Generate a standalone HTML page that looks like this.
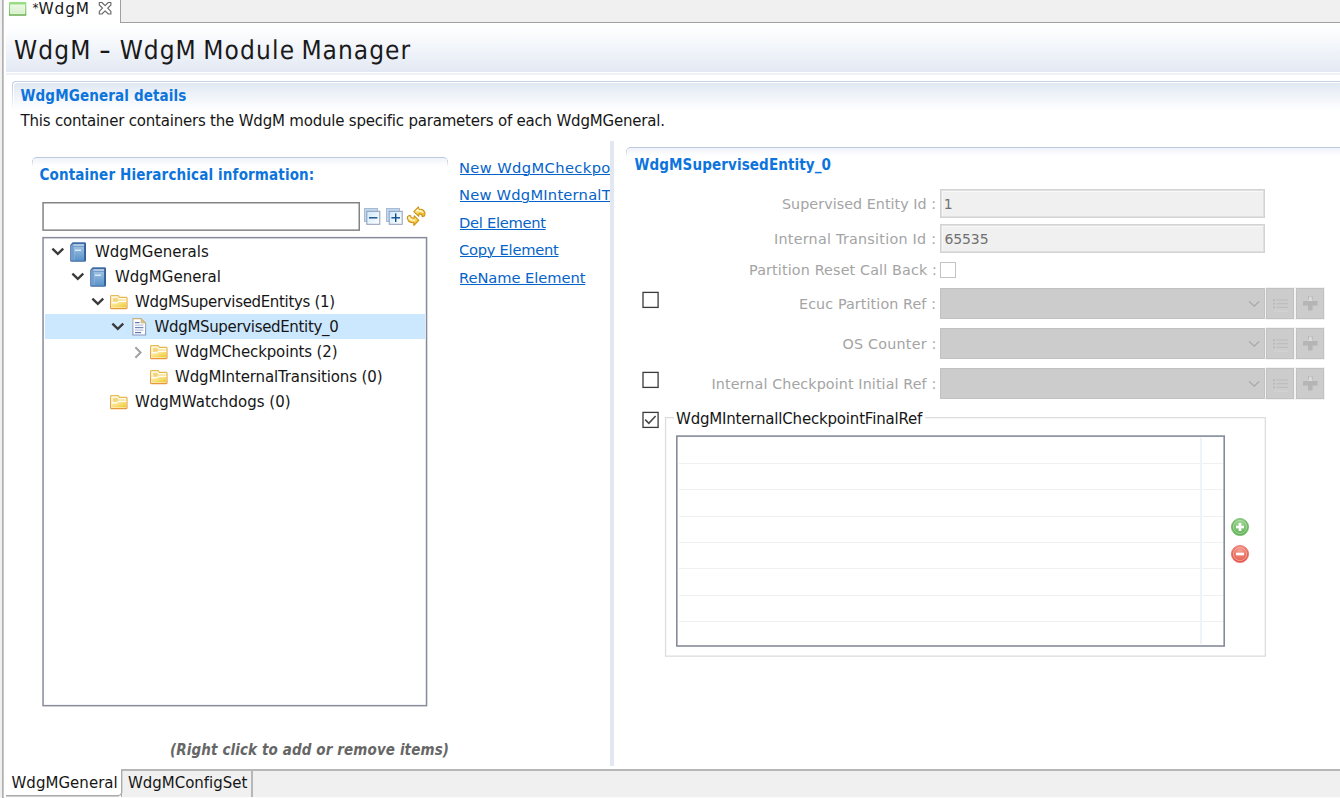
<!DOCTYPE html>
<html lang="en">
<head>
<meta charset="utf-8">
<title>WdgM - WdgM Module Manager</title>
<style>
html,body{margin:0;padding:0;background:#fff;}
body{width:1340px;height:798px;overflow:hidden;position:relative;font-family:'DejaVu Sans','Liberation Sans',sans-serif;font-size:15px;color:#161616;}
.a{position:absolute;box-sizing:border-box;}
.t{position:absolute;white-space:pre;display:block;}
svg{position:absolute;overflow:visible;}
.lk{position:absolute;left:0;white-space:pre;display:block;line-height:20px;font-size:14.7px;color:#0563c9;text-decoration:underline;text-decoration-thickness:1px;text-underline-offset:1px;cursor:pointer;}
.combo{position:absolute;box-sizing:border-box;left:940px;width:325px;height:31px;background:#cccccc;border:1px solid #c1c1c1;}
.btn{position:absolute;box-sizing:border-box;width:28px;height:31px;background:#cccccc;border:1px solid #c1c1c1;box-shadow:0 0 0 1px #f3f3f3;}
.fld{position:absolute;box-sizing:border-box;left:940px;width:325px;height:29px;background:#f0f0f0;border:1px solid #d3d3d3;box-shadow:inset 0 0 0 1px #dfdfdf, inset 2px 2px 0 0 #f8f8f8;}
.cb{position:absolute;box-sizing:border-box;left:642px;width:16px;height:16px;border:1px solid #333;background:#fff;}
.gl{position:absolute;left:679px;width:544px;height:1px;background:#f0f0f0;}
</style>
</head>
<body>
<!-- window left edge -->
<div class="a" style="left:0;top:0;width:2px;height:798px;background:#f0f0f0"></div>
<div class="a" style="left:2px;top:0;width:1px;height:798px;background:#b2b2b2"></div>
<div class="a" style="left:3px;top:0;width:1px;height:798px;background:#c6c6c6"></div>

<!-- top tab bar -->
<div class="a" style="left:120px;top:0;width:1220px;height:23px;background:#f0f0f0;border-left:1px solid #a0a0a0;border-bottom:1px solid #a0a0a0"></div>
<!-- tab icon -->
<svg style="left:8.8px;top:1.95px" width="18" height="14" viewBox="0 0 18 14">
 <defs><linearGradient id="gi0" x1="0" y1="0" x2="0" y2="1"><stop offset="0" stop-color="#9ce084"/><stop offset="0.75" stop-color="#7ccb62"/><stop offset="1" stop-color="#64aa4e"/></linearGradient>
 <linearGradient id="gi" x1="0" y1="0" x2="0" y2="1"><stop offset="0" stop-color="#ebf8e4"/><stop offset="1" stop-color="#d7efcb"/></linearGradient></defs>
 <rect x="0" y="0" width="17.3" height="13.85" rx="0.7" fill="url(#gi0)"/>
 <rect x="1.2" y="2.5" width="14.9" height="9.7" fill="#f3fbef"/>
 <rect x="1.7" y="3" width="13.9" height="8.7" fill="url(#gi)"/>
</svg>
<!-- close X -->
<svg style="left:98px;top:1px" width="15" height="15" viewBox="0 0 15 15">
 <path d="M1.3 1.5 L3.9 1.5 L7.1 4.7 L10.3 1.5 L12.9 1.5 L12.9 4 L9.7 7.2 L12.9 10.4 L12.9 13 L10.3 13 L7.1 9.8 L3.9 13 L1.3 13 L1.3 10.4 L4.5 7.2 L1.3 4 Z" fill="#fff" stroke="#686868" stroke-width="1.15" stroke-linejoin="round"/>
</svg>

<!-- title band -->
<div class="a" style="left:6px;top:23px;width:1334px;height:49px;background:linear-gradient(#ffffff 0%,#fbfcfe 20%,#e3e9f3 100%)"></div>
<div class="a" style="left:6px;top:73px;width:1334px;height:2px;background:#eef2f8"></div>

<!-- section: WdgMGeneral details -->
<div class="a" style="left:12px;top:81px;width:1340px;height:29px;border-top:1px solid #c3d0e2;border-left:1px solid #c3d0e2;border-radius:4px 0 0 0;background:#fff"></div>
<div class="a" style="left:14px;top:83px;width:1340px;height:27px;border-radius:3px 0 0 0;background:linear-gradient(#e1e8f3,#ffffff)"></div>
<div class="a" style="left:12px;top:86px;width:1px;height:25px;background:linear-gradient(rgba(255,255,255,0),#ffffff)"></div>

<!-- sash -->
<div class="a" style="left:610px;top:141px;width:4px;height:625px;background:#e1e8f2"></div>

<!-- left section header -->
<div class="a" style="left:32px;top:157px;width:416px;height:9px;border-top:1px solid #bccbe0;border-radius:5px 5px 0 0;background:linear-gradient(#f0f3f9,#ffffff)"></div>
<div class="a" style="left:32px;top:160px;width:1px;height:7px;background:linear-gradient(#c3cfe0,#ffffff)"></div>
<div class="a" style="left:447px;top:160px;width:1px;height:7px;background:linear-gradient(#c3cfe0,#ffffff)"></div>

<!-- right section header -->
<div class="a" style="left:626px;top:147px;width:760px;height:9px;border-top:1px solid #bccbe0;border-radius:5px 0 0 0;background:linear-gradient(#f0f3f9,#ffffff)"></div>
<div class="a" style="left:626px;top:150px;width:1px;height:7px;background:linear-gradient(#c3cfe0,#ffffff)"></div>

<!-- filter input -->
<svg style="left:0;top:0" width="1340" height="798"><rect x="43.05" y="202.75" width="316.20" height="27.40" fill="#fff" stroke="#848484" stroke-width="1.5"/></svg>

<!-- collapse all -->
<svg style="left:364px;top:208px" width="17" height="17" viewBox="0 0 17 17">
 <defs><linearGradient id="gb" x1="0" y1="0" x2="1" y2="1"><stop offset="0" stop-color="#cfe8f8"/><stop offset="1" stop-color="#ffffff"/></linearGradient></defs>
 <rect x="0.5" y="0.5" width="13" height="13" fill="#bfd9ee" stroke="#a9b9d2"/>
 <rect x="2.8" y="3.3" width="13" height="13" fill="url(#gb)" stroke="#8e9cba"/>
 <rect x="5" y="9.1" width="8.4" height="1.4" fill="#0f4c8a"/>
</svg>
<!-- expand all -->
<svg style="left:386px;top:208px" width="17" height="17" viewBox="0 0 17 17">
 <rect x="0.5" y="0.5" width="13" height="13" fill="#bfd9ee" stroke="#a9b9d2"/>
 <rect x="3.2" y="3.3" width="13" height="13" fill="url(#gb)" stroke="#8e9cba"/>
 <rect x="5.4" y="9.1" width="8.6" height="1.4" fill="#0f4c8a"/>
 <rect x="9" y="5.4" width="1.4" height="8.6" fill="#0f4c8a"/>
</svg>
<!-- refresh -->
<svg style="left:406px;top:206px" width="20" height="20" viewBox="0 0 20 20">
 <defs><linearGradient id="gy" x1="0" y1="0" x2="0.6" y2="1"><stop offset="0" stop-color="#fff6c0"/><stop offset="0.5" stop-color="#f9dd6a"/><stop offset="1" stop-color="#eeb92a"/></linearGradient></defs>
 <path d="M7.8 5.6 L12.5 1 L12.9 3.5 C15 3 17.6 3.8 18.7 6.2 C19.2 7.6 19 9.2 18.5 10 L16.2 10.6 C16.2 8.8 15.4 7.7 13 7.9 L12.8 10.3 Z" fill="url(#gy)" stroke="#cc9216" stroke-width="1.1" stroke-linejoin="round"/>
 <path d="M10 5.4 L12 3.6 L12.4 5 C14.5 4.6 16.4 5.2 17.2 6.8" fill="none" stroke="#fffbe0" stroke-width="1.1" opacity="0.9"/>
 <path d="M12.8 14.3 L7.9 19.4 L7.9 16.7 C5.6 17 3 16.2 1.9 13.8 C1.3 12.4 1.4 11.2 1.6 10.6 L3.2 9.5 L4.7 9.7 C4.6 11.4 5.6 12.3 8 12.1 L8.3 9.8 Z" fill="url(#gy)" stroke="#cc9216" stroke-width="1.1" stroke-linejoin="round"/>
 <path d="M3 11.2 C3.2 13 5.2 14.6 8.6 14.2 L8.8 15.2" fill="none" stroke="#fffbe0" stroke-width="1.1" opacity="0.9"/>
</svg>

<!-- tree -->
<svg style="left:0;top:0" width="1340" height="798"><rect x="43.05" y="237.65" width="383.50" height="468.00" fill="#fff" stroke="#868b99" stroke-width="1.5"/></svg>
<div class="a" style="left:45px;top:314px;width:380px;height:25px;background:#cce8ff"></div>

<svg width="0" height="0" style="left:0;top:0">
 <defs>
  <linearGradient id="bk1" x1="0" y1="0" x2="0" y2="1"><stop offset="0" stop-color="#9cc0e2"/><stop offset="1" stop-color="#5a93ca"/></linearGradient>
  <linearGradient id="fo1" x1="0" y1="0" x2="1" y2="1"><stop offset="0" stop-color="#fcf0bc"/><stop offset="0.55" stop-color="#f6dc6c"/><stop offset="1" stop-color="#efc62e"/></linearGradient>
  <linearGradient id="fo2" x1="0" y1="0" x2="0" y2="1"><stop offset="0" stop-color="#e7bd52"/><stop offset="1" stop-color="#e6983a"/></linearGradient>
  <g id="book">
   <path d="M0.2 3 L2.6 0.2 L14.8 0.2 Q16 0.2 16 1.4 L16 18.2 Q16 19.8 14.4 19.8 L1.6 19.8 Q0.2 19.8 0.2 18.4 Z" fill="#416da5"/>
   <path d="M0.9 3.4 L2.9 1.9 L3.4 1.9 L3.4 18.6 L0.9 18.6 Z" fill="#729ecd"/>
   <rect x="3.3" y="2.1" width="11.2" height="2.2" fill="#b3cce8"/>
   <rect x="3.6" y="4.7" width="10.6" height="13.6" fill="url(#bk1)"/>
   <rect x="3.6" y="4.7" width="0.9" height="13.6" fill="#a9c8e6" opacity="0.7"/>
   <rect x="14.3" y="1.6" width="1.7" height="17" fill="#335f96"/>
   <rect x="5" y="7.5" width="6" height="1.5" fill="#dce9f6"/>
   <rect x="1" y="18.2" width="13.4" height="1" fill="#5b88bd"/>
  </g>
  <g id="folder">
   <path d="M0.6 1.4 Q0.6 0.6 1.4 0.6 L8.2 0.6 L9.4 2.4 L16.2 2.4 Q17 2.4 17 3.2 L17 12.8 Q17 13.6 16.2 13.6 L1.4 13.6 Q0.6 13.6 0.6 12.8 Z" fill="#fffaea" stroke="url(#fo2)" stroke-width="1.2"/>
   <path d="M2.6 2.7 L7.5 2.7 L8.7 4.3 L15.6 4.3 L15.6 6 L8.8 6 L7.2 7.4 L2.6 7.4 Z" fill="#f7e3a0"/>
   <path d="M3.4 3.3 L7 3.3 L7.8 4.6 L7.6 5.6 L6.6 6.6 L3.4 6.6 Z" fill="#f2d070" opacity="0.8"/>
   <path d="M1.8 8.3 L7 8.3 L8.6 6.9 L16 6.9 L16 12.6 L1.8 12.6 Z" fill="url(#fo1)"/>
   <path d="M1.6 7.8 L6.9 7.8 L8.5 6.4 L16.2 6.4" fill="none" stroke="#fffef6" stroke-width="1"/>
  </g>
  <g id="chevd"><path d="M1.2 1.4 L5.8 5.8 L10.4 1.4" fill="none" stroke="#3a3a3a" stroke-width="2.3" stroke-linecap="square" stroke-linejoin="miter"/></g>
  <g id="chevr"><path d="M1.1 1 L5.6 5.5 L1.1 10" fill="none" stroke="#a2a2a2" stroke-width="2" stroke-linecap="square" stroke-linejoin="miter"/></g>
  <g id="cchev"><path d="M0.3 0.5 L5.2 5.2 L10.1 0.5" fill="none" stroke="#a9a9a9" stroke-width="1.3"/></g>
  <g id="licon">
   <rect x="0" y="0" width="2" height="2" fill="#bcbcbc"/><rect x="3.7" y="0.4" width="11.2" height="1.2" fill="#bdbdbd"/>
   <rect x="0" y="3.7" width="2" height="2" fill="#bcbcbc"/><rect x="3.7" y="4.1" width="11.2" height="1.2" fill="#bdbdbd"/>
   <rect x="0" y="7.4" width="2" height="2" fill="#bcbcbc"/><rect x="3.7" y="7.8" width="11.2" height="1.2" fill="#bdbdbd"/>
   <rect x="1" y="11.6" width="14" height="1" fill="#d4d4d4"/>
  </g>
  <g id="picon">
   <rect x="0" y="5" width="14.6" height="4.6" fill="#b5b5b5"/>
   <rect x="5" y="0" width="4.6" height="14.4" fill="#b5b5b5"/>
   <path d="M5.9 0.5 L8.7 0.5 L8.7 3 L9.6 5 L5 5 L5.9 3 Z" fill="#dcdcdc"/>
  </g>
 </defs>
</svg>

<!-- row1 -->
<svg style="left:52.2px;top:248.3px" width="12" height="8"><use href="#chevd"/></svg>
<svg style="left:70px;top:242px" width="16" height="20"><use href="#book"/></svg>
<!-- row2 -->
<svg style="left:72.2px;top:273.3px" width="12" height="8"><use href="#chevd"/></svg>
<svg style="left:90px;top:267px" width="16" height="20"><use href="#book"/></svg>
<!-- row3 -->
<svg style="left:92.2px;top:298.3px" width="12" height="8"><use href="#chevd"/></svg>
<svg style="left:110px;top:295.2px" width="18" height="15"><use href="#folder"/></svg>
<!-- row4 -->
<svg style="left:112.2px;top:323.3px" width="12" height="8"><use href="#chevd"/></svg>
<svg style="left:132px;top:318px" width="15" height="18" viewBox="0 0 15 18">
 <defs><linearGradient id="dc" x1="0" y1="0" x2="0" y2="1"><stop offset="0" stop-color="#c9b27a"/><stop offset="0.45" stop-color="#9aa5c4"/><stop offset="1" stop-color="#8896bc"/></linearGradient></defs>
 <path d="M0.9 0.6 L9 0.6 L13.6 5 L13.6 17 L0.9 17 Z" fill="#fdfdff" stroke="url(#dc)" stroke-width="1.1"/>
 <path d="M9 0.6 L9 5 L13.6 5 Z" fill="#dcc48c" stroke="#c9ae72" stroke-width="0.6"/>
 <rect x="3" y="4" width="4.6" height="1.2" fill="#5d77b2"/>
 <rect x="3" y="6.4" width="8.4" height="1.5" fill="#c3cde4"/>
 <rect x="3" y="9" width="8.4" height="1.2" fill="#6f86bb"/>
 <rect x="3" y="11.4" width="8.4" height="1.5" fill="#c3cde4"/>
 <rect x="3" y="14" width="6" height="1.2" fill="#5d77b2"/>
</svg>
<!-- row5 -->
<svg style="left:134.5px;top:347px" width="8" height="12"><use href="#chevr"/></svg>
<svg style="left:150px;top:345.2px" width="18" height="15"><use href="#folder"/></svg>
<!-- row6 -->
<svg style="left:150px;top:370.2px" width="18" height="15"><use href="#folder"/></svg>
<!-- row7 -->
<svg style="left:110px;top:395.2px" width="18" height="15"><use href="#folder"/></svg>

<!-- links (clipped by sash) -->
<div class="a" style="left:460px;top:150px;width:150px;height:160px;overflow:hidden">
<a class="lk" style="left:-1px;top:7.71px;letter-spacing:0.379px">New WdgMCheckpoint</a>
<a class="lk" style="left:-1px;top:35.21px;letter-spacing:0.219px">New WdgMInternalTransition</a>
<a class="lk" style="left:-1px;top:62.71px;letter-spacing:-0.300px">Del Element</a>
<a class="lk" style="left:-1px;top:90.21px;letter-spacing:-0.273px">Copy Element</a>
<a class="lk" style="left:-1px;top:117.71px;letter-spacing:-0.077px">ReName Element</a>

</div>

<!-- bottom tab bar -->
<div class="a" style="left:121px;top:769px;width:1219px;height:28px;background:#f0f0f0;border-top:2px solid #b7b7b7;border-left:1px solid #aaaaaa"></div>
<div class="a" style="left:4px;top:770px;width:118px;height:26px;border-right:1px solid #aaaaaa;border-bottom:1px solid #aaaaaa;border-radius:0 0 4px 0;background:#fff"></div>
<div class="a" style="left:122px;top:771px;width:1px;height:22px;background:#d4d4d4"></div>
<div class="a" style="left:4px;top:795px;width:2px;height:1px;background:#fff"></div>
<div class="a" style="left:6px;top:796px;width:113px;height:1px;background:#cfcfcf"></div>
<div class="a" style="left:251px;top:771px;width:2px;height:26px;background:#b7b7b7"></div>
<div class="a" style="left:4px;top:797px;width:1336px;height:1px;background:#fbfbfb"></div>

<!-- right: fields -->
<div class="fld" style="top:189px"></div>
<div class="fld" style="top:224px"></div>
<div class="a" style="left:940px;top:262px;width:16px;height:16px;border:1px solid #c3c3c3;background:#fff"></div>

<div class="combo" style="top:288px"></div>
<div class="combo" style="top:328px"></div>
<div class="combo" style="top:368px"></div>
<svg style="left:1248.5px;top:301px" width="11" height="7"><use href="#cchev"/></svg>
<svg style="left:1248.5px;top:341px" width="11" height="7"><use href="#cchev"/></svg>
<svg style="left:1248.5px;top:381px" width="11" height="7"><use href="#cchev"/></svg>

<div class="btn" style="left:1266px;top:288px"></div><div class="btn" style="left:1296px;top:288px"></div>
<div class="btn" style="left:1266px;top:328px"></div><div class="btn" style="left:1296px;top:328px"></div>
<div class="btn" style="left:1266px;top:368px"></div><div class="btn" style="left:1296px;top:368px"></div>
<svg style="left:1272.6px;top:299px" width="16" height="14"><use href="#licon"/></svg>
<svg style="left:1272.6px;top:339px" width="16" height="14"><use href="#licon"/></svg>
<svg style="left:1272.6px;top:379px" width="16" height="14"><use href="#licon"/></svg>
<svg style="left:1302.7px;top:296px" width="15" height="15"><use href="#picon"/></svg>
<svg style="left:1302.7px;top:336px" width="15" height="15"><use href="#picon"/></svg>
<svg style="left:1302.7px;top:376px" width="15" height="15"><use href="#picon"/></svg>

<!-- enable checkboxes -->
<svg style="left:0;top:0" width="700" height="440">
 <rect x="643" y="292.4" width="15.1" height="15" fill="#fff" stroke="#3a3a3a" stroke-width="1.3"/>
 <rect x="643" y="372.4" width="15.1" height="15" fill="#fff" stroke="#3a3a3a" stroke-width="1.3"/>
 <rect x="643" y="412.4" width="15.1" height="15" fill="#fff" stroke="#3a3a3a" stroke-width="1.3"/>
 <path d="M645.2 419.6 L648.8 423.3 L655.6 416" fill="none" stroke="#484848" stroke-width="1.6"/>
</svg>

<!-- group box -->
<svg style="left:0;top:0" width="1340" height="798"><rect x="665.55" y="417.65" width="599.80" height="238.50" fill="none" stroke="#dddddd" stroke-width="1.3"/></svg>
<div class="a" style="left:674px;top:415px;width:251px;height:5px;background:#fff"></div>
<!-- table -->
<svg style="left:0;top:0" width="1340" height="798"><rect x="676.80" y="436.10" width="547.40" height="209.90" fill="#fff" stroke="#868b99" stroke-width="1.6"/></svg>
<div class="gl" style="top:463px"></div>
<div class="gl" style="top:489px"></div>
<div class="gl" style="top:516px"></div>
<div class="gl" style="top:542px"></div>
<div class="gl" style="top:568px"></div>
<div class="gl" style="top:595px"></div>
<div class="gl" style="top:621px"></div>
<div class="a" style="left:1200px;top:438px;width:2px;height:206px;background:#edf3fb"></div>

<!-- add / remove -->
<svg style="left:1231px;top:518px" width="18" height="18" viewBox="0 0 18 18">
 <defs><radialGradient id="gg" cx="0.5" cy="0.3" r="0.8"><stop offset="0" stop-color="#a5d89a"/><stop offset="1" stop-color="#4fa846"/></radialGradient></defs>
 <circle cx="9" cy="9" r="8.6" fill="url(#gg)" stroke="#5aae50" stroke-width="0.6"/>
 <circle cx="9" cy="9" r="6.6" fill="none" stroke="#c8e8c0" stroke-width="0.7" opacity="0.8"/>
 <rect x="5" y="7.7" width="8" height="2.6" fill="#fff"/><rect x="7.7" y="5" width="2.6" height="8" fill="#fff"/>
</svg>
<svg style="left:1231px;top:545px" width="18" height="18" viewBox="0 0 18 18">
 <defs><radialGradient id="gr" cx="0.5" cy="0.3" r="0.8"><stop offset="0" stop-color="#f5a090"/><stop offset="1" stop-color="#e04a40"/></radialGradient></defs>
 <circle cx="9" cy="9" r="8.6" fill="url(#gr)" stroke="#e0584c" stroke-width="0.6"/>
 <circle cx="9" cy="9" r="6.6" fill="none" stroke="#f8c8c0" stroke-width="0.7" opacity="0.8"/>
 <rect x="5" y="7.7" width="8" height="2.6" fill="#fff"/>
</svg>

<!-- texts -->
<span class="t" style="left:32.40px;top:-2.15px;line-height:20px;font-size:12px;">*</span>
<span class="t" style="left:38.50px;top:-0.89px;line-height:20px;font-size:15.3px;letter-spacing:0.933px;">WdgM</span>
<span class="t" style="left:14.00px;top:33.41px;line-height:36px;font-size:26px;letter-spacing:1.133px;color:#1a1a1a;font-family:'DejaVu Sans Condensed', 'Liberation Sans', sans-serif;text-rendering:geometricPrecision;">WdgM</span>
<span class="t" style="left:99.30px;top:33.41px;line-height:36px;font-size:26px;color:#1a1a1a;font-family:'DejaVu Sans Condensed', 'Liberation Sans', sans-serif;text-rendering:geometricPrecision;transform:scaleX(1.4);transform-origin:0 0;">-</span>
<span class="t" style="left:119.70px;top:33.41px;line-height:36px;font-size:26px;letter-spacing:1.000px;color:#1a1a1a;font-family:'DejaVu Sans Condensed', 'Liberation Sans', sans-serif;text-rendering:geometricPrecision;">WdgM</span>
<span class="t" style="left:203.30px;top:33.41px;line-height:36px;font-size:26px;letter-spacing:1.140px;color:#1a1a1a;font-family:'DejaVu Sans Condensed', 'Liberation Sans', sans-serif;text-rendering:geometricPrecision;">Module</span>
<span class="t" style="left:301.40px;top:33.41px;line-height:36px;font-size:26px;letter-spacing:1.033px;color:#1a1a1a;font-family:'DejaVu Sans Condensed', 'Liberation Sans', sans-serif;text-rendering:geometricPrecision;">Manager</span>
<span class="t" style="left:20.50px;top:85.61px;line-height:20px;font-size:15px;letter-spacing:0.139px;color:#0c74dc;font-family:'DejaVu Sans Condensed', 'Liberation Sans', sans-serif;font-weight:bold;">WdgMGeneral details</span>
<span class="t" style="left:20.50px;top:111.11px;line-height:20px;font-size:15px;letter-spacing:-0.204px;">This container containers the WdgM module specific parameters of each WdgMGeneral.</span>
<span class="t" style="left:39.50px;top:165.11px;line-height:20px;font-size:15px;letter-spacing:0.147px;color:#0c74dc;font-family:'DejaVu Sans Condensed', 'Liberation Sans', sans-serif;font-weight:bold;">Container Hierarchical information:</span>
<span class="t" style="left:95.00px;top:242.11px;line-height:20px;font-size:15px;">WdgMGenerals</span>
<span class="t" style="left:115.00px;top:267.11px;line-height:20px;font-size:15px;">WdgMGeneral</span>
<span class="t" style="left:135.00px;top:292.11px;line-height:20px;font-size:15px;letter-spacing:-0.333px;">WdgMSupervisedEntitys (1)</span>
<span class="t" style="left:154.50px;top:317.11px;line-height:20px;font-size:15px;letter-spacing:-0.333px;">WdgMSupervisedEntity_0</span>
<span class="t" style="left:175.00px;top:342.11px;line-height:20px;font-size:15px;letter-spacing:-0.139px;">WdgMCheckpoints (2)</span>
<span class="t" style="left:175.00px;top:367.11px;line-height:20px;font-size:15px;letter-spacing:-0.135px;">WdgMInternalTransitions (0)</span>
<span class="t" style="left:135.00px;top:392.11px;line-height:20px;font-size:15px;">WdgMWatchdogs (0)</span>
<span class="t" style="left:170.00px;top:739.61px;line-height:20px;font-size:15px;letter-spacing:0.114px;color:#666666;font-family:'DejaVu Sans Condensed', 'Liberation Sans', sans-serif;font-weight:bold;font-style:italic;">(Right click to add or remove items)</span>
<span class="t" style="left:11.50px;top:773.11px;line-height:20px;font-size:15px;letter-spacing:0.030px;">WdgMGeneral</span>
<span class="t" style="left:128.00px;top:773.11px;line-height:20px;font-size:15px;letter-spacing:-0.017px;">WdgMConfigSet</span>
<span class="t" style="left:634.50px;top:154.61px;line-height:20px;font-size:15px;letter-spacing:0.119px;color:#0c74dc;font-family:'DejaVu Sans Condensed', 'Liberation Sans', sans-serif;font-weight:bold;">WdgMSupervisedEntity_0</span>
<span class="t" style="left:782.00px;top:193.65px;line-height:20px;font-size:14.3px;letter-spacing:0.048px;color:#a4a4a4;">Supervised Entity Id :</span>
<span class="t" style="left:774.00px;top:228.65px;line-height:20px;font-size:14.3px;letter-spacing:0.261px;color:#a4a4a4;">Internal Transition Id :</span>
<span class="t" style="left:749.00px;top:259.65px;line-height:20px;font-size:14.3px;letter-spacing:0.154px;color:#a4a4a4;">Partition Reset Call Back :</span>
<span class="t" style="left:799.00px;top:293.65px;line-height:20px;font-size:14.3px;letter-spacing:0.105px;color:#a4a4a4;">Ecuc Partition Ref :</span>
<span class="t" style="left:842.50px;top:333.65px;line-height:20px;font-size:14.3px;letter-spacing:0.227px;color:#a4a4a4;">OS Counter :</span>
<span class="t" style="left:711.50px;top:373.65px;line-height:20px;font-size:14.3px;letter-spacing:0.109px;color:#a4a4a4;">Internal Checkpoint Initial Ref :</span>
<span class="t" style="left:943.80px;top:194.36px;line-height:20px;font-size:14px;color:#707070;">1</span>
<span class="t" style="left:944.50px;top:229.16px;line-height:20px;font-size:14px;letter-spacing:-0.125px;color:#707070;">65535</span>
<span class="t" style="left:676.00px;top:408.61px;line-height:20px;font-size:15px;letter-spacing:-0.190px;">WdgMInternallCheckpointFinalRef</span>
</body>
</html>
